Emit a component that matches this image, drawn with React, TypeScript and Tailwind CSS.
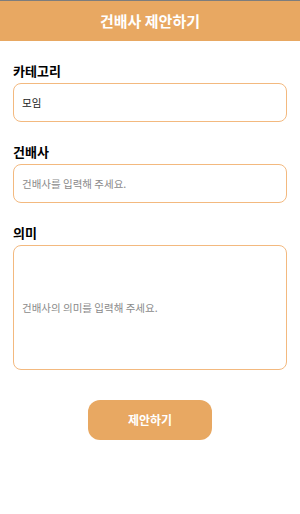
export default function App() {
  const font = { fontFamily: '"Noto Sans CJK KR", "Noto Sans", sans-serif' }
  return (
    <div className="w-[300px] h-[514px] bg-white border-t border-[#7d7d7d]" style={font}>
      <div className="h-[40px] bg-[#e8a862] flex items-center justify-center">
        <h1 className="text-white font-bold text-[15px]">건배사 제안하기</h1>
      </div>

      <div className="px-[13px] pt-[21px] flex flex-col">
        <label className="text-[13px] font-bold text-black leading-[18px]">카테고리</label>
        <input
          defaultValue="모임"
          className="mt-[3px] h-[39px] w-full border border-[#f3b97f] rounded-[8px] px-[8px] text-[10.5px] text-[#222] outline-none"
        />

        <label className="mt-[21px] text-[13px] font-bold text-black leading-[18px]">건배사</label>
        <input
          placeholder="건배사를 입력해 주세요."
          className="mt-[3px] h-[39px] w-full border border-[#f3b97f] rounded-[8px] px-[8px] text-[10.5px] placeholder:text-[#8a8a8a] outline-none"
        />

        <label className="mt-[21px] text-[13px] font-bold text-black leading-[18px]">의미</label>
        <input
          placeholder="건배사의 의미를 입력해 주세요."
          className="mt-[3px] h-[125px] w-full border border-[#f3b97f] rounded-[8px] px-[8px] text-[10.5px] placeholder:text-[#8a8a8a] outline-none"
        />

        <div className="mt-[30px] flex justify-center">
          <button className="w-[124px] h-[40px] rounded-[12px] bg-[#e8a862] text-white text-[12px] font-bold">
            제안하기
          </button>
        </div>
      </div>
    </div>
  )
}
